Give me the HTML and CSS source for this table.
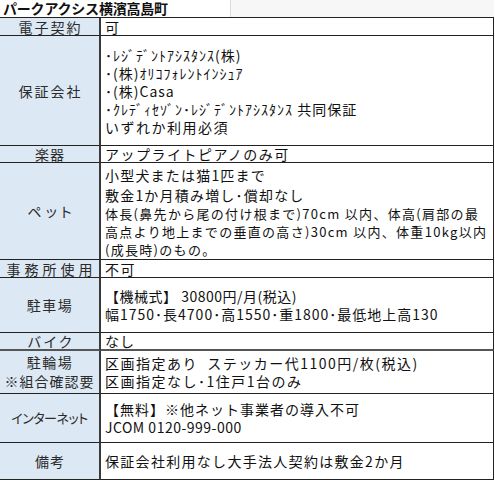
FILE: index.html
```html
<!DOCTYPE html>
<html lang="ja">
<head>
<meta charset="utf-8">
<link rel="stylesheet" href="styles.css">
</head>
<body>
<div class="top">
  <div class="title">パークアクシス横濱高島町</div>
  <div class="blank"></div>
</div>
<div class="sheet">
  <div class="lab ls2">電子契約</div>
  <div class="val one">可</div>

  <div class="lab ls2">保証会社</div>
  <div class="val">
    <div>･ﾚｼﾞﾃﾞﾝﾄｱｼｽﾀﾝｽ(株)</div>
    <div>･(株)ｵﾘｺﾌｫﾚﾝﾄｲﾝｼｭｱ</div>
    <div>･(株)Casa</div>
    <div>･ｸﾚﾃﾞｨｾｿﾞﾝ･ﾚｼﾞﾃﾞﾝﾄｱｼｽﾀﾝｽ 共同保証</div>
    <div class="wide">いずれか利用必須</div>
  </div>

  <div class="lab ls1">楽器</div>
  <div class="val one wide">アップライトピアノのみ可</div>

  <div class="lab kana4">ペット</div>
  <div class="val pet">
    <div class="big">小型犬または猫1匹まで</div>
    <div class="big">敷金1か月積み増し･償却なし</div>
    <div class="sm">体長(鼻先から尾の付け根まで)70cm 以内、体高(肩部の最</div>
    <div class="sm">高点より地上までの垂直の高さ)30cm 以内、体重10kg以内</div>
    <div class="sm">(成長時)のもの。</div>
  </div>

  <div class="lab ls4">事務所使用</div>
  <div class="val one wide">不可</div>

  <div class="lab ls15">駐車場</div>
  <div class="val">
    <div class="tight">【機械式】 30800円/月(税込)</div>
    <div>幅1750･長4700･高1550･重1800･最低地上高130</div>
  </div>

  <div class="lab kana3 thick">バイク</div>
  <div class="val one thick">なし</div>

  <div class="lab lab2">
    <div class="ls15">駐輪場</div>
    <div>※組合確認要</div>
  </div>
  <div class="val">
    <div class="wide">区画指定あり&nbsp; ステッカー代1100円/枚(税込)</div>
    <div class="wide">区画指定なし･1住戸1台のみ</div>
  </div>

  <div class="lab net">インターネット</div>
  <div class="val">
    <div>【無料】※他ネット事業者の導入不可</div>
    <div class="latin">JCOM 0120-999-000</div>
  </div>

  <div class="lab ls1">備考</div>
  <div class="val note">保証会社利用なし大手法人契約は敷金2か月</div>
</div>
</body>
</html>
```

FILE: styles.css
```css
html, body {
  margin: 0;
  padding: 0;
  background: #ffffff;
}

body {
  font-family: "Noto Sans CJK JP", "Noto Sans", sans-serif;
  color: #111;
  width: 495px;
}

.top {
  display: flex;
  height: 17px;
  width: 494px;
}

.title {
  width: 227px;
  padding-left: 3px;
  font-size: 14px;
  font-weight: bold;
  line-height: 17px;
  letter-spacing: -0.2px;
  border-right: 1px solid #dcdcdc;
  white-space: nowrap;
}

.blank {
  flex: 1;
  background: #f7f7f7;
}

.sheet {
  display: grid;
  width: 494px;
  grid-template-columns: 101px 393px;
  grid-template-rows: 18px 110px 17px 97px 18px 55px 18px 43px 49px 37px;
  border-top: 1px solid #222;
  box-sizing: border-box;
}

.lab {
  background: #dce8f4;
  border-right: 2px solid #3a3a3a;
  border-bottom: 1px solid #222;
  display: flex;
  flex-direction: column;
  align-items: center;
  justify-content: center;
  font-size: 14px;
  line-height: 16px;
  color: #2a2a2a;
  white-space: nowrap;
}

.ls1 { letter-spacing: 1px; padding-left: 1px; }
.ls15 { letter-spacing: 1.5px; padding-left: 1px; }
.ls2 { letter-spacing: 2px; padding-left: 2px; }
.ls4 { letter-spacing: 4px; padding-left: 4px; }

.kana4 {
  font-feature-settings: "palt";
  letter-spacing: 4px;
  padding-left: 4px;
}

.kana3 {
  font-feature-settings: "palt";
  letter-spacing: 3px;
  padding-left: 3px;
}

.net {
  font-size: 13px;
  font-feature-settings: "palt";
  letter-spacing: -0.5px;
}

.lab2 {
  letter-spacing: 1px;
  line-height: 19px;
}

.val {
  border-right: 1px solid #222;
  border-bottom: 1px solid #222;
  display: flex;
  flex-direction: column;
  justify-content: center;
  padding-left: 4px;
  font-size: 14px;
  line-height: 18px;
  letter-spacing: 1px;
  white-space: nowrap;
  min-height: 0;
}

.one {
  line-height: 16px;
}

.wide {
  letter-spacing: 1.5px;
}

.tight {
  letter-spacing: 0.5px;
}

.latin {
  letter-spacing: 0.5px;
}

.note {
  letter-spacing: 1.3px;
}

.thick {
  border-bottom: 2px solid #555;
}

.pet {
  justify-content: flex-start;
  padding-top: 2px;
}

.pet .big {
  font-size: 14px;
  line-height: 20px;
  letter-spacing: 1.2px;
}

.pet .sm {
  font-size: 13px;
  line-height: 18px;
  letter-spacing: 1.3px;
}
```
